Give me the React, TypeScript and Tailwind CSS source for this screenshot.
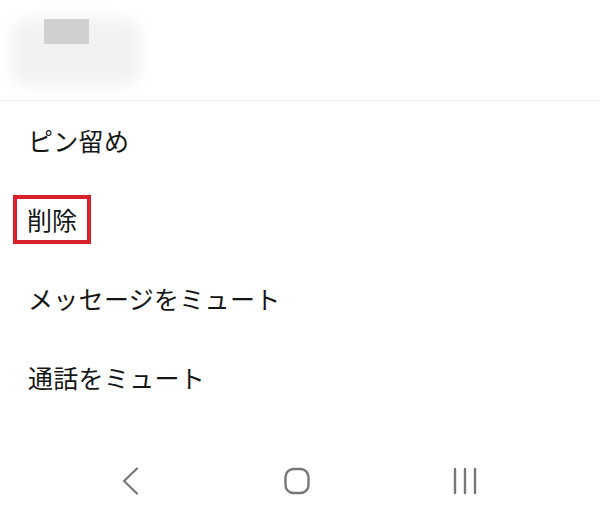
const menuItems = [
  { label: "ピン留め", highlighted: false },
  { label: "削除", highlighted: true },
  { label: "メッセージをミュート", highlighted: false },
  { label: "通話をミュート", highlighted: false },
];

function NavBar() {
  return (
    <div className="h-[99px] pt-[46px]">
      <div className="flex w-full items-center justify-between pl-[121px] pr-[121px]">
        <svg width="18" height="28" viewBox="0 0 18 28" fill="none">
          <path d="M16 1.5L3 14L16 26.5" stroke="#777" strokeWidth="2.2" strokeLinecap="round" strokeLinejoin="round" />
        </svg>
        <svg width="28" height="28" viewBox="0 0 28 28" fill="none" className="ml-[3px]">
          <rect x="2.5" y="2" width="23" height="24" rx="8" stroke="#777" strokeWidth="2.4" />
        </svg>
        <svg width="28" height="28" viewBox="0 0 28 28" fill="none">
          <path d="M4 2V26M14 2V26M24 2V26" stroke="#777" strokeWidth="2.4" strokeLinecap="round" />
        </svg>
      </div>
    </div>
  );
}

export default function App() {
  return (
    <div
      className="flex h-[520px] w-[600px] flex-col overflow-hidden bg-white text-[#161616]"
      style={{ fontFamily: '"Noto Sans CJK JP", "Noto Sans", sans-serif' }}
    >
      <div className="relative h-[101px] shrink-0 border-b border-[#f1f1f1]">
        <div className="absolute left-[12px] top-[18px] h-[68px] w-[128px] rounded-[16px] bg-[#f2f2f2] blur-[7px]" />
        <div className="absolute left-[44px] top-[19px] h-[25px] w-[45px] bg-[#d0d0d0]" />
      </div>

      <div className="flex flex-col">
        {menuItems.map((item) => (
          <div
            key={item.label}
            className={`flex h-[79px] items-center ${item.highlighted ? "pl-[13px]" : "pl-[28px]"}`}
          >
            {item.highlighted ? (
              <span className="border-4 border-[#d9212c] px-[10px] py-[8px] text-[25px] leading-[25px]">
                {item.label}
              </span>
            ) : (
              <span className="text-[25px] leading-[25px] tracking-[0.3px]">{item.label}</span>
            )}
          </div>
        ))}
      </div>

      <div className="flex-1" />
      <NavBar />
    </div>
  );
}
